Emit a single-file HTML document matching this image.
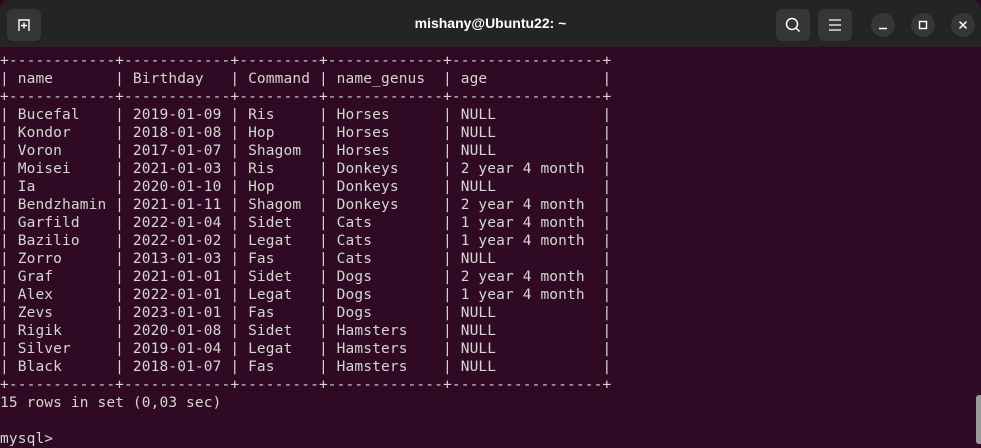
<!DOCTYPE html>
<html><head><meta charset="utf-8"><style>
html,body{margin:0;padding:0;width:981px;height:444px;overflow:hidden;background:#300a24;}
.tb{position:absolute;left:0;top:0;width:981px;height:47px;background:#242424;border-radius:10px 10px 0 0;}
.title{position:absolute;left:0;right:0;top:15px;text-align:center;color:#ffffff;font:bold 14px "Liberation Sans",sans-serif;}
.btn{position:absolute;top:9px;width:34px;height:32px;background:#363636;border-radius:6px;}
.cb{position:absolute;top:13px;width:24px;height:24px;background:#363636;border-radius:50%;}
pre{position:absolute;left:0;top:52px;margin:0;font:14.5px/18px "DejaVu Sans Mono",monospace;letter-spacing:0.13px;color:#d3d7cf;}
.sb{position:absolute;left:976px;top:395px;width:5px;height:49px;background:#9a9a9a;border-radius:3px 0 0 3px;}
</style></head><body>
<div class="tb">
<div class="btn" style="left:7px"><svg width="34" height="32"><path d="M12 22V11h10v11M14 16.5h6M17 13.5v6" stroke="#fff" stroke-width="1.4" fill="none"/></svg></div>
<div class="title">mishany@Ubuntu22: ~</div>
<div class="btn" style="left:776px"><svg width="34" height="32"><circle cx="16" cy="15" r="5.5" stroke="#fff" stroke-width="1.5" fill="none"/><path d="M20 19l3.5 3.5" stroke="#fff" stroke-width="1.5"/></svg></div>
<div class="btn" style="left:818px"><svg width="34" height="32"><path d="M11 11h12M11 16h12M11 21h12" stroke="#fff" stroke-width="1.3"/></svg></div>
<div class="cb" style="left:871px"><svg width="24" height="24"><path d="M8 15.5h8" stroke="#fff" stroke-width="1.5"/></svg></div>
<div class="cb" style="left:911px"><svg width="24" height="24"><rect x="8.5" y="8.5" width="7" height="7" stroke="#fff" stroke-width="1.4" fill="none"/></svg></div>
<div class="cb" style="left:951px"><svg width="24" height="24"><path d="M8.5 8.5l7 7M15.5 8.5l-7 7" stroke="#fff" stroke-width="1.5"/></svg></div>
</div>
<pre>+------------+------------+---------+-------------+-----------------+
| name       | Birthday   | Command | name_genus  | age             |
+------------+------------+---------+-------------+-----------------+
| Bucefal    | 2019-01-09 | Ris     | Horses      | NULL            |
| Kondor     | 2018-01-08 | Hop     | Horses      | NULL            |
| Voron      | 2017-01-07 | Shagom  | Horses      | NULL            |
| Moisei     | 2021-01-03 | Ris     | Donkeys     | 2 year 4 month  |
| Ia         | 2020-01-10 | Hop     | Donkeys     | NULL            |
| Bendzhamin | 2021-01-11 | Shagom  | Donkeys     | 2 year 4 month  |
| Garfild    | 2022-01-04 | Sidet   | Cats        | 1 year 4 month  |
| Bazilio    | 2022-01-02 | Legat   | Cats        | 1 year 4 month  |
| Zorro      | 2013-01-03 | Fas     | Cats        | NULL            |
| Graf       | 2021-01-01 | Sidet   | Dogs        | 2 year 4 month  |
| Alex       | 2022-01-01 | Legat   | Dogs        | 1 year 4 month  |
| Zevs       | 2023-01-01 | Fas     | Dogs        | NULL            |
| Rigik      | 2020-01-08 | Sidet   | Hamsters    | NULL            |
| Silver     | 2019-01-04 | Legat   | Hamsters    | NULL            |
| Black      | 2018-01-07 | Fas     | Hamsters    | NULL            |
+------------+------------+---------+-------------+-----------------+
15 rows in set (0,03 sec)

mysql&gt; </pre>
<div class="sb"></div>
</body></html>
